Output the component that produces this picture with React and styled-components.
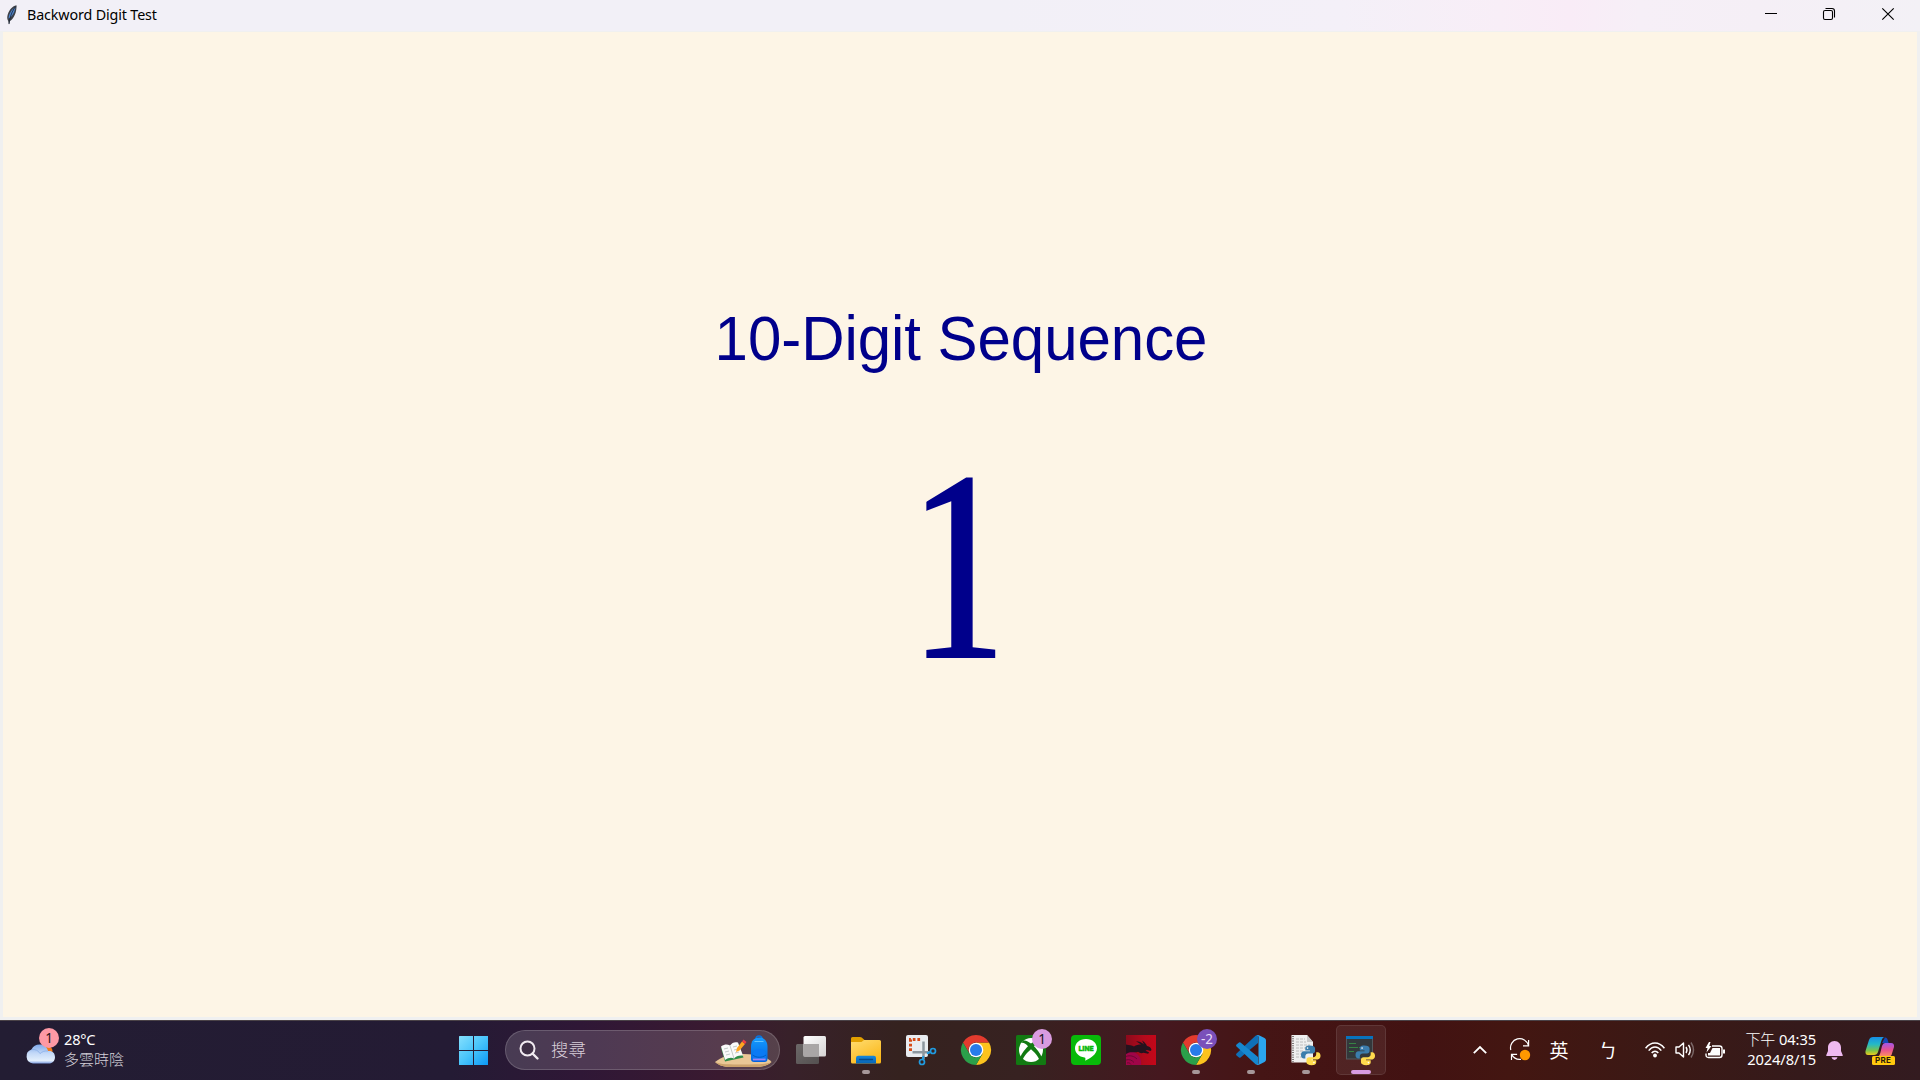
import React from "react";
import styled, { createGlobalStyle } from "styled-components";

const UI = `"Noto Sans", "Noto Sans CJK TC", sans-serif`;
const CJK = `"Noto Sans CJK TC", sans-serif`;

const Global = createGlobalStyle`
  * { box-sizing: border-box; }
  body { margin: 0; overflow: hidden; background: #f0f0f0; font-family: ${UI}; }
  svg { display: block; overflow: visible; }
`;

const Desktop = styled.div`
  width: 1920px;
  height: 1080px;
  display: flex;
  flex-direction: column;
`;

const TitleBar = styled.header`
  height: 31px;
  padding-right: 3px;
  display: flex;
  align-items: center;
  background: linear-gradient(90deg, #f2f0f7 0, #f2f0f7 1000px, #f4f0f8 1340px, #f8eef7 1500px, #f9ecf7 1570px, #f6eff7 1640px, #f5eff6 1760px, #f3f1f6 1920px);
`;

const AppIcon = styled.div`
  width: 27px;
  height: 29px;
  padding: 4px 0 0 6px;
`;

const Title = styled.h1`
  flex: 1;
  margin: 0;
  padding-bottom: 2px;
  font-size: 14.3px;
  line-height: 20px;
  font-weight: 400;
  letter-spacing: -0.13px;
  color: #000;
`;

const WindowButton = styled.button`
  width: 58.5px;
  height: 28px;
  padding: 0;
  margin-bottom: 3px;
  border: 0;
  background: none;
  display: grid;
  place-items: center;
`;

const Client = styled.main`
  height: 989px;
  padding: 1px 3px 3px;
  background: #f0f0f0;
`;

const Canvas = styled.section`
  height: 985px;
  padding-top: 265px;
  display: flex;
  flex-direction: column;
  align-items: center;
  background: #fdf5e6;
  color: #00008b;
`;

const Heading = styled.h2`
  margin: 0 0 0 2px;
  font: 400 60px/84px "Liberation Sans", sans-serif;
  letter-spacing: -0.05px;
  transform: scaleY(1.05);
`;

/* The numeral is narrowed and its foot serif trimmed to a short base. */
const Digit = styled.div`
  width: 136px;
  margin: 35px 5px 0 0;
  text-align: center;
  font: 400 273.5px/300px "Liberation Serif", serif;
  transform: scaleX(0.93);
  clip-path: inset(0 28px 0 34px);
`;

const Taskbar = styled.footer`
  height: 60px;
  display: flex;
  border-top: 1px solid #4a4247;
  background: linear-gradient(90deg, #231d33 0, #241b34 450px, #2f1736 580px, #3a1a30 720px, #38212a 790px, #35221f 900px, #372221 1020px, #45181f 1160px, #451515 1260px, #421212 1420px, #431611 1510px, #3b1915 1660px, #351a1b 1800px, #331b20 1920px);
`;

const Weather = styled.div`
  width: 446px;
  height: 56px;
  padding-left: 23px;
  display: flex;
  align-items: center;
`;

const WeatherText = styled.div`
  padding: 0 0 0 11px;
  font-size: 14.6px;
  line-height: 20px;
  letter-spacing: -0.2px;
  color: #fff;
`;

const Muted = styled.div`
  font: 300 15px/20px ${CJK};
  letter-spacing: 0;
  color: #d3d0d8;
`;

const TaskButton = styled.div`
  position: relative;
  width: 55px;
  height: 58px;
  padding-left: 12px;
  display: flex;
  align-items: center;
`;

const ActiveTile = styled.div`
  position: absolute;
  inset: 4px 3px 4px 2px;
  border: 1px solid rgba(255, 255, 255, 0.09);
  border-radius: 5px;
  background: rgba(255, 255, 255, 0.07);
`;

const IconBox = styled.div`
  position: relative;
  width: 30px;
  height: 30px;
`;

const Indicator = styled.div`
  position: absolute;
  bottom: 5px;
  left: ${(p) => (p.$wide ? 17 : 23)}px;
  width: ${(p) => (p.$wide ? 20 : 8)}px;
  height: 4px;
  border-radius: 2px;
  background: ${(p) => (p.$wide ? "#d99be0" : "#a69799")};
`;

const Badge = styled.div`
  position: absolute;
  top: -6px;
  right: -6px;
  width: 20px;
  height: 20px;
  border-radius: 50%;
  background: ${(p) => p.$bg};
  color: ${(p) => p.$fg};
  font-size: 13.5px;
  line-height: 20px;
  text-align: center;
`;

const SearchBox = styled.div`
  width: 275px;
  height: 40px;
  margin: 9px 4px 0;
  padding: 0 7px 0 13px;
  display: flex;
  align-items: center;
  border: 1px solid rgba(255, 255, 255, 0.17);
  border-radius: 20px;
  background: rgba(255, 255, 255, 0.15);
`;

const SearchLabel = styled.span`
  flex: 1;
  padding: 0 0 3px 12px;
  font: 300 17.4px/24px ${CJK};
  color: #d8ced9;
`;

const SearchArt = styled.div`
  padding-top: 3px;
`;

const Tray = styled.div`
  flex: 1;
  height: 58px;
  display: flex;
  align-items: center;
  justify-content: flex-end;
`;

const TrayItem = styled.div`
  width: ${(p) => p.$w}px;
  display: grid;
  place-items: center;
  color: #fff;
  font: 400 19px/28px ${CJK};
`;

const Clock = styled.div`
  width: 84px;
  padding-bottom: 3px;
  text-align: right;
  color: #fff;
  font-size: 14.7px;
  line-height: 20px;
  letter-spacing: -0.1px;
  white-space: nowrap;
  span { font: 300 15px/20px ${CJK}; }
`;

const Feather = () => (
  <svg width="12" height="20" viewBox="0 0 12 20">
    <path d="M10.500.3C6 1 2.200 6 1.300 11.500c-.2 1.500 0 3 .8 4.300L3 19.500l1-3.500C8 14 10.800 7 10.500.3z" fill="#3c4048" />
    <path d="M9.500 2.300C6 4 3.200 8 2.500 13.500c3-1 6-5.500 7-11.200z" fill="#4f86cf" />
    <path d="M9.800 1.500C6 6 4.200 11 3 19" fill="none" stroke="#17202e" strokeWidth=".8" />
  </svg>
);

const Minimize = () => (
  <svg width="12" height="12"><path d="M0 5.500h12" stroke="#000" /></svg>
);
const Restore = () => (
  <svg width="12" height="12" fill="none" stroke="#000" strokeWidth="1.100">
    <rect x=".5" y="2.500" width="9" height="9" rx="1.500" />
    <path d="M2.500 .5H9a2.500 2.500 0 0 1 2.500 2.500v6.500" />
  </svg>
);
const Close = () => (
  <svg width="12" height="12"><path d="M.3 .3l11.400 11.400M11.700.3L.3 11.700" stroke="#000" strokeWidth="1.150" /></svg>
);

const Cloud = () => (
  <svg width="34" height="34" viewBox="0 0 34 34">
    <defs>
      <linearGradient id="cloud" x2="0" y2="1"><stop stopColor="#7fa9ea" /><stop offset=".45" stopColor="#c2d8f8" /><stop offset=".85" stopColor="#e3effc" /><stop offset="1" stopColor="#7d9de0" /></linearGradient>
    </defs>
    <circle cx="24.500" cy="17" r="5" fill="#f47a17" />
    <g transform="translate(1 -3)">
      <path d="M9 32.500a7.200 7.200 0 0 1-1.500-14C9 15 12 13.500 15.500 13.500c4.500 0 7.500 2.500 8.500 6.500 4.500-.5 7 2 7 6.200 0 3.800-2.800 6.300-6 6.300z" fill="url(#cloud)" />
      <path d="M7.500 18.600c4-.6 7 1 8.500 4 2-2 5-3 8-2.600" fill="none" stroke="#83aae6" strokeWidth="1" opacity=".7" />
    </g>
  </svg>
);

const Windows = () => (
  <svg width="30" height="30" viewBox="-.5 -.5 30 30">
    <defs><linearGradient id="win" x2="1" y2="1"><stop stopColor="#85e0fd" /><stop offset=".5" stopColor="#48c4fb" /><stop offset="1" stopColor="#0c98f5" /></linearGradient></defs>
    <path fill="url(#win)" d="M1 .5h13.500V14.500H.5V1zM15.500 .5h14V14.500h-14zM.5 15.500h14v14H.5zM15.500 15.500h14v14h-14z" />
  </svg>
);

const Magnifier = () => (
  <svg width="20" height="20" viewBox="0 0 20 20" fill="none" stroke="#f0eaf0">
    <circle cx="8.500" cy="8.500" r="7" strokeWidth="2" fill="rgba(30,15,30,.25)" />
    <path d="M13.500 13.500l5 5" strokeWidth="2.400" strokeLinecap="round" />
  </svg>
);

const School = () => (
  <svg width="57" height="34" viewBox="0 0 57 34">
    <defs><linearGradient id="bag" x2="0" y2="1"><stop stopColor="#159cff" /><stop offset="1" stopColor="#0063e0" /></linearGradient></defs>
    <path d="M0 27c8-6 15-8 28-8s24 3 28.500 8c-3 3-9 5-15 5H16C9 32 3 30 0 27z" fill="#e9c796" />
    <path d="M0 27c6 2.500 14 2.500 28 2.500S50 29.500 56.500 27c-3 3-9 5-15 5H16C9 32 3 30 0 27z" fill="#cba26c" />
    <path d="M6 13l17-5 5.500 14.500-18.500 4z" fill="#2f8d49" />
    <path d="M6 11.500c4-2.500 6-2.500 9-1 2-3 5-4 8-3l5 13c-4-.5-7 .5-9 3-3-1.500-6-.5-9 1.500z" fill="#fafafa" />
    <path d="M15 10.500l4 13M9 14l4-1M10 17l4-1M11 20l4-1M18 12l4-1M19 15l4-1M20 18l4-1" stroke="#b4bdbb" strokeWidth=".8" fill="none" />
    <path d="M21 17l1-4 5-6.500 3 2.500-5.500 6.500z" fill="#ffa51f" />
    <path d="M27 6.500l1.500-2 3 2.500L30 9z" fill="#ef3f45" />
    <path d="M41 4c0-4 6-4 6 0" fill="none" stroke="#0873df" strokeWidth="1.500" />
    <path d="M36 12c0-6 3-9.500 8.200-9.500S52.500 6 52.500 12v12c0 2-1 3-3 3H39c-2 0-3-1-3-3z" fill="url(#bag)" />
    <path d="M37.500 20c0-8 13.500-8 13.500 0v5h-13.500z" fill="#0a7af5" />
    <path d="M37.500 20c4 3 9.500 3 13.500 0" fill="none" stroke="#005bc6" />
    <path d="M38 24.500h12.500" stroke="#9a83f4" strokeWidth="1.800" />
    <path d="M39.500 6.500h9" stroke="#62c4ff" strokeWidth="1" />
  </svg>
);

const TaskView = () => (
  <svg width="30" height="30" viewBox="0 0 30 30">
    <defs>
      <linearGradient id="tvA" x2="1" y2="1"><stop stopColor="#fff" /><stop offset="1" stopColor="#d5d3d3" /></linearGradient>
      <linearGradient id="tvB" x2="1" y2="1"><stop stopColor="#6c6868" /><stop offset="1" stopColor="#545050" /></linearGradient>
    </defs>
    <rect y="9" width="23" height="20" rx="1.500" fill="url(#tvB)" />
    <rect x="7.500" y="1" width="22.500" height="20.500" rx="1.500" fill="url(#tvA)" />
    <rect x="7.500" y="9" width="15.500" height="12.500" fill="#a9a6a6" />
  </svg>
);

const Explorer = () => (
  <svg width="30" height="30" viewBox="0 0 30 30">
    <defs>
      <linearGradient id="fold" x2=".6" y2="1"><stop stopColor="#ffdc70" /><stop offset="1" stopColor="#fbb81a" /></linearGradient>
      <linearGradient id="foldB" x2="0" y2="1"><stop stopColor="#1587db" /><stop offset="1" stopColor="#0865b5" /></linearGradient>
    </defs>
    <path d="M0 3.500Q0 2 1.500 2h7.500q1 0 1.700.6L13.500 5H15v4H0z" fill="#e2a000" />
    <path d="M0 7h10.500l2.500-2H28.500Q30 5 30 6.500V27q0 1.500-1.500 1.500h-27Q0 28.500 0 27z" fill="url(#fold)" />
    <path d="M5 28.500V23q0-2.200 2.200-2.200h15.600q2.200 0 2.200 2.200v5.500z" fill="url(#foldB)" />
    <path d="M8.500 24.500h13" stroke="#064a8a" strokeWidth="1.300" strokeLinecap="round" />
  </svg>
);

const Snip = () => (
  <svg width="31" height="32" viewBox="0 0 31 32">
    <rect y="0" width="22" height="22" rx="2" fill="#e9ecf0" />
    <path d="M4.500 16V4.500H16" fill="none" stroke="#d64a17" strokeWidth="3" strokeDasharray="2.700 1.900" />
    <path d="M6.500 17.300h17M17.500 6.500v18" stroke="#8d979f" strokeWidth="2.500" fill="none" />
    <circle cx="27" cy="16" r="2.500" fill="none" stroke="#209be0" strokeWidth="1.700" />
    <circle cx="16" cy="27" r="2.500" fill="none" stroke="#209be0" strokeWidth="1.700" />
    <path d="M21 18.500l3.500-1.500M17.500 21l-.8 3.500" stroke="#209be0" strokeWidth="2" />
  </svg>
);

const Chrome = () => (
  <svg width="30" height="30" viewBox="0 0 30 30">
    <path d="M15 7.500H28A15 15 0 0 1 15 30L21.500 18.700z" fill="#fcc31e" />
    <path d="M2 7.500A15 15 0 0 1 28 7.500H15A7.500 7.500 0 0 0 8.500 18.700L2 7.500z" fill="#e33b2e" />
    <path d="M2 7.500L8.500 18.700Q11 22.500 15 22.500l6.500-3.800L15 30A15 15 0 0 1 2 7.500z" fill="#2ba04a" />
    <circle cx="15" cy="15" r="7.300" fill="#fff" />
    <circle cx="15" cy="15" r="6" fill="#287bea" />
  </svg>
);

const Xbox = () => (
  <svg width="30" height="30" viewBox="0 0 30 30">
    <rect width="30" height="30" rx="1.500" fill="#127a12" />
    <circle cx="15" cy="15" r="12" fill="#fff" />
    <path d="M7 5.500c3-.5 5.500 1 8 3 2.500-2 5-3.500 8-3l1.500 2.300c-2.500-.3-4.500 1-6.500 3.400 4 4 7.500 9 8 12.500l-2.500 1.800c-1-4-5-8.500-8.500-11.300-3.500 2.800-7.500 7.300-8.500 11.300L4 23.700c.5-3.500 4-8.500 8-12.500-2-2.400-4-3.700-6.500-3.400z" fill="#127a12" />
  </svg>
);

const LineText = styled.span`
  position: absolute;
  left: 0;
  top: 8px;
  width: 30px;
  text-align: center;
  font: 900 7.200px/11px Roboto, sans-serif;
  color: #08b909;
  -webkit-text-stroke: 0.4px #08b909;
`;
const Line = () => (
  <>
    <svg width="30" height="30" viewBox="0 0 30 30">
      <rect width="30" height="30" rx="4" fill="#08b909" />
      <path d="M15 4C8.500 4 4 8.200 4 13.300c0 4.700 4 8.500 9.500 9.200 1.200.2 1 1.200.7 3.200 4.500-2 11.800-6 11.800-12.400C26 8.200 21.500 4 15 4z" fill="#fff" />
    </svg>
    <LineText>LINE</LineText>
  </>
);

const Dragon = () => (
  <svg width="30" height="30" viewBox="0 0 30 30">
    <defs>
      <linearGradient id="drg" x2="1"><stop stopColor="#8c0a1c" /><stop offset=".6" stopColor="#b40a1c" /><stop offset="1" stopColor="#c40719" /></linearGradient>
    </defs>
    <rect width="30" height="30" fill="url(#drg)" />
    <path d="M0 17c5-2 10 0 13 4 2 3 2.500 6 2 9H0z" fill="#a00548" />
    <path d="M0 9.500c3 .5 6 1 8 2 2-1.500 4.500-2 7-2l-5-3.200c3 0 5.500 1.200 8 3.200l-2-4c3 1.800 4 3.500 5 5.500 2.500.5 4.200 1.700 4.500 4l-1 1-3.500-1-1.500.8 3.500 1.500-.8 1.500-4.700-1c-2 .8-4 .2-5.500-1C9 18.500 5 15.500 0 19z" fill="#24131e" />
    <path d="M0 21.500c4-1.500 8-.5 11 2.500M0 25c3-1 6 0 8 2.500M1 28c2-.5 3 0 4 1.500" stroke="#64082f" strokeWidth=".9" fill="none" />
  </svg>
);

const VSCode = () => (
  <svg width="30" height="30" viewBox="0 0 30 30">
    <path d="M22 0v8L4.500 22.500q-.8.600-1.500 0L.5 20.500q-1-1 0-2L19.500.7Q21 0 22 0z" fill="#0f6fb7" />
    <path d="M22 30v-8L4.500 7.500q-.8-.600-1.500 0L.5 9.500q-1 1 0 2L19.500 29.300Q21 30 22 30z" fill="#1687cf" />
    <path d="M20.500 29.500c1 .8 2 .5 3 0l5-2.400q1.500-.8 1.500-2.300V5.200q0-1.500-1.500-2.300l-5-2.400c-1-.5-2-.8-3 0 1-.4 2 .3 2 1.500v26c0 1.200-1 1.900-2 1.500z" fill="#2ba5ee" />
  </svg>
);

const PythonGlyph = ({ x, y }) => (
  <g transform={`translate(${x} ${y}) scale(.82)`}>
    <path d="M12 0C7 0 6 2 6 4v3h6.500v1H4C1.500 8 0 10 0 13s1.500 5 4 5h2v-3c0-2.500 1.800-4 4-4h6c2 0 3.500-1.500 3.500-3.500V4C19.500 1.500 17 0 12 0z" transform="scale(.88)" fill="#3b7dac" />
    <path d="M12 24c5 0 6-2 6-4v-3h-6.500v-1H20c2.500 0 4-2 4-5s-1.500-5-4-5h-2v3c0 2.500-1.800 4-4 4H8c-2 0-3.500 1.500-3.500 3.500V20c0 2.500 2.500 4 7.500 4z" transform="translate(2.700 2.900) scale(.88)" fill="#ffdb4d" />
    <circle cx="8" cy="3.200" r="1" fill="#fff" />
    <circle cx="15.800" cy="20.800" r="1" fill="#fff" />
  </g>
);

const PyFile = () => (
  <svg width="30" height="30" viewBox="0 0 30 30">
    <path d="M.5 0H16l6 7v20.500H.5z" fill="#efefef" />
    <path d="M16 0v7h6z" fill="#c8c8c8" />
    <path d="M2 1v26" stroke="#7d7575" strokeWidth="2" strokeDasharray="1 1.300" />
    <path d="M5 4h9M5 7h10M5 10h14M5 13h12M5 16h8M5 19h7M5 22h7" stroke="#bcbcbc" strokeWidth="1" strokeDasharray="3 1" />
    <PythonGlyph x={10} y={10.500} />
  </svg>
);

const Idle = () => (
  <svg width="30" height="30" viewBox="0 0 30 30">
    <rect x="0" y="1" width="27" height="23.500" fill="#56595d" />
    <rect x="1" y="4" width="25" height="19.500" fill="#33383b" />
    <rect x="0" y="1" width="27" height="3" fill="#0873bd" />
    <path d="M3 8.500h7M3 12.500h9M13 12.500h4M3 16.500h5" stroke="#368344" strokeWidth="1.200" />
    <PythonGlyph x={9.500} y={10.500} />
  </svg>
);

const Chevron = () => (
  <svg width="14" height="8"><path d="M.8 7.200l6.200-6.200 6.200 6.200" fill="none" stroke="#fff" strokeWidth="1.800" /></svg>
);
const Sync = () => (
  <svg width="20" height="20" viewBox="0 0 20 20" fill="none" stroke="#fff" strokeWidth="1.200">
    <path d="M.8 10A9 9 0 0 1 18.500 5.500M18.600 0v5.800h-5.600" />
    <path d="M1.500 20v-5.600h5.600M1.800 14.600A9 9 0 0 0 11 19.300" />
    <circle cx="15" cy="15" r="5.200" fill="#ff9800" stroke="none" />
  </svg>
);
const Wifi = () => (
  <svg width="20" height="16" viewBox="0 0 20 16" fill="none" stroke="#fff" strokeWidth="1.500">
    <path d="M.6 6.200C6-.8 14-.8 19.400 6.200M3.700 8.600C7.300 3.800 12.700 3.800 16.300 8.600M6.700 11c1.900-2.500 4.700-2.500 6.600 0" />
    <circle cx="10" cy="13.500" r="1.900" fill="#fff" stroke="none" />
  </svg>
);
const Sound = () => (
  <svg width="20" height="18" viewBox="0 0 20 18" fill="none" stroke="#fff" strokeWidth="1.400">
    <path d="M1 6h3L8.500 2v14L4 12H1z" strokeLinejoin="round" />
    <path d="M11 6q2 3 0 6M13.500 3.800q3.500 5.200 0 10.400" />
    <path d="M16 1.500q5 7.500 0 15" stroke="#7c6969" />
  </svg>
);
const Battery = () => (
  <svg width="20" height="17" viewBox="0 0 20 17">
    <path d="M7 4h7.500Q17 4 17 6.500v6.500q0 2.500-2.500 2.500h-11Q1 15.500 1 13v-1.500" fill="none" stroke="#fff" strokeWidth="1.400" />
    <path d="M7.500 6H15v7.500H3V11h2z" fill="#fff" />
    <path d="M18 7.500h2v4h-2zM4 0L.5 6h2L1.500 10.500 6.500 4H4.300L5.500 0z" fill="#fff" />
  </svg>
);
const Bell = () => (
  <svg width="17" height="19" viewBox="0 0 17 19" fill="#eeb9f0">
    <path d="M8.500 0C4.500 0 2 3 2 6.500V10L.2 14.200Q0 15 .8 15h15.400q.8 0 .6-.8L15 10V6.500C15 3 12.500 0 8.500 0z" />
    <path d="M5.500 16.200h6Q10.800 19 8.500 19T5.500 16.200z" />
  </svg>
);

const Pre = styled.span`
  position: absolute;
  left: 7px;
  bottom: 0;
  width: 23px;
  height: 9px;
  border-radius: 1.500px;
  background: #ffc90e;
  color: #2a1a08;
  font: 700 8px/9px Inter, sans-serif;
  letter-spacing: 0.2px;
  text-align: center;
`;
const Copilot = () => (
  <svg width="30" height="30" viewBox="0 0 30 30">
    <defs>
      <linearGradient id="cpA" x2="0" y2="1"><stop stopColor="#168fe8" /><stop offset=".4" stopColor="#23b9c7" /><stop offset=".75" stopColor="#7ac34b" /><stop offset="1" stopColor="#edca1b" /></linearGradient>
      <linearGradient id="cpB" x2="0" y2="1"><stop stopColor="#a156e8" /><stop offset=".5" stopColor="#e9538e" /><stop offset="1" stopColor="#ff965c" /></linearGradient>
    </defs>
    <path d="M20 2.500c2 0 2.500 1.500 3 3.500l.7 2H17z" fill="#1647b7" />
    <path d="M8 2h12c-2 0-3 1.500-4 5l-3 10q-1 3-4 3H3Q0 20 .5 16L4 5q1-3 4-3z" fill="url(#cpA)" />
    <path d="M20 8h6q3.500 0 3 4l-2.500 8q-1 2-4 2H11c2.500 0 3.500-1.500 4.300-4L17 11q1-3 3-3z" fill="url(#cpB)" />
  </svg>
);

const apps = [
  { icon: TaskView },
  { icon: Explorer, running: true },
  { icon: Snip },
  { icon: Chrome },
  { icon: Xbox, badge: "1", bg: "#d99be0", fg: "#201520" },
  { icon: Line },
  { icon: Dragon },
  { icon: Chrome, running: true, badge: "-2", bg: "#7a50ba", fg: "#e9dcf7" },
  { icon: VSCode, running: true },
  { icon: PyFile, running: true },
  { icon: Idle, running: true, active: true },
];

export default function App() {
  return (
    <Desktop>
      <Global />
      <TitleBar>
        <AppIcon><Feather /></AppIcon>
        <Title>Backword Digit Test</Title>
        <WindowButton><Minimize /></WindowButton>
        <WindowButton><Restore /></WindowButton>
        <WindowButton><Close /></WindowButton>
      </TitleBar>
      <Client>
        <Canvas>
          <Heading>10-Digit Sequence</Heading>
          <Digit>1</Digit>
        </Canvas>
      </Client>
      <Taskbar>
        <Weather>
          <IconBox>
            <Cloud />
            <Badge $bg="#fd99a5" $fg="#2b1418">1</Badge>
          </IconBox>
          <WeatherText>
            28°C
            <Muted>多雲時陰</Muted>
          </WeatherText>
        </Weather>
        <TaskButton><IconBox><Windows /></IconBox></TaskButton>
        <SearchBox>
          <Magnifier />
          <SearchLabel>搜尋</SearchLabel>
          <SearchArt><School /></SearchArt>
        </SearchBox>
        {apps.map(({ icon: Icon, running, active, badge, bg, fg }, i) => (
          <TaskButton key={i}>
            {active && <ActiveTile />}
            <IconBox>
              <Icon />
              {badge && <Badge $bg={bg} $fg={fg}>{badge}</Badge>}
            </IconBox>
            {running && <Indicator $wide={active} />}
          </TaskButton>
        ))}
        <Tray>
          <TrayItem $w={40}><Chevron /></TrayItem>
          <TrayItem $w={40}><Sync /></TrayItem>
          <TrayItem $w={38}>英</TrayItem>
          <TrayItem $w={60}>ㄅ</TrayItem>
          <TrayItem $w={34}><Wifi /></TrayItem>
          <TrayItem $w={26}><Sound /></TrayItem>
          <TrayItem $w={34}><Battery /></TrayItem>
          <Clock>
            <span>下午</span> 04:35<br />2024/8/15
          </Clock>
          <TrayItem $w={37}><Bell /></TrayItem>
          <TrayItem $w={53}><IconBox><Copilot /><Pre>PRE</Pre></IconBox></TrayItem>
          <TrayItem $w={14} />
        </Tray>
      </Taskbar>
    </Desktop>
  );
}
